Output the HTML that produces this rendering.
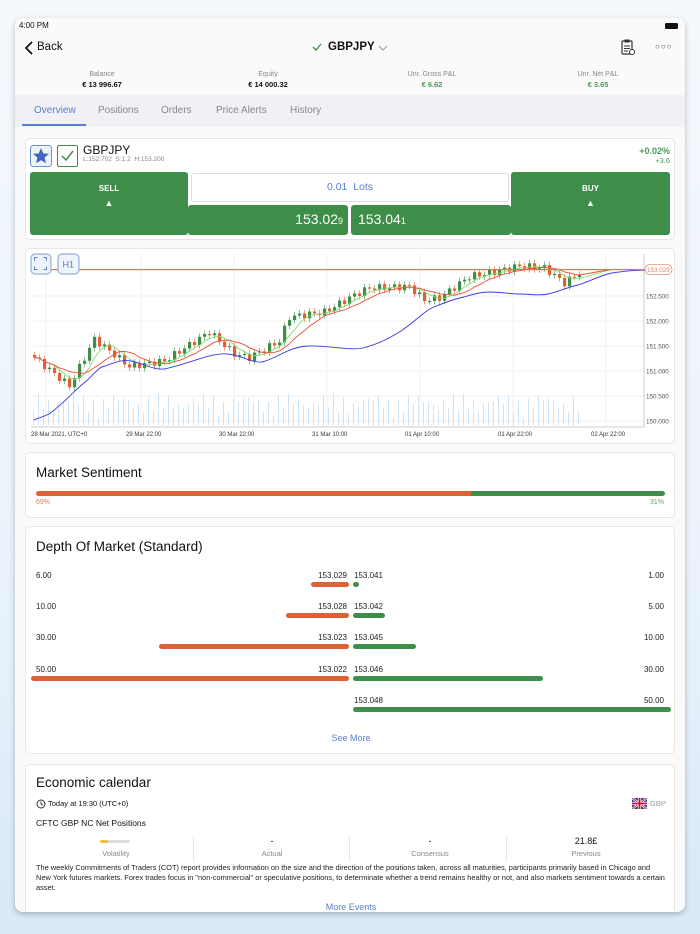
<!DOCTYPE html>
<html><head><meta charset="utf-8">
<style>
*{box-sizing:border-box;margin:0;padding:0}
body{width:700px;height:934px;overflow:hidden;font-family:"Liberation Sans",sans-serif;background:linear-gradient(180deg,#f4f9fd 0%,#eaf3fb 60%,#d9e9f8 100%);position:relative;color:#111}
.scr{position:absolute;left:15px;top:18px;width:670px;height:894px;background:#fafafa;border-radius:8px;overflow:hidden;box-shadow:0 2px 6px rgba(0,0,0,.25)}
.abs{position:absolute}
.card{position:absolute;left:10px;width:650px;background:#fff;border:1px solid #e6e6e6;border-radius:5px}
.sm{font-size:7px;color:#888;text-align:center}
.val{font-size:7.5px;font-weight:bold;text-align:center}
.tab{position:absolute;top:87px;font-size:10px;color:#888}
.h{font-size:13.5px;color:#111}
.dl{position:absolute;font-size:8px;color:#222}
.bar{position:absolute;height:5px;border-radius:3px}
.r{background:#dd6136}.g{background:#3e8e4a}
</style></head><body>
<div class="scr">
 <div class="abs" style="left:4px;top:3px;font-size:8px">4:00 PM</div>
 <div class="abs" style="left:650px;top:5px;width:13px;height:6px;background:#111;border-radius:1.5px"></div>
 <svg class="abs" style="left:8px;top:22px" width="12" height="16"><path d="M9 2 L3 8 L9 14" stroke="#111" stroke-width="1.8" fill="none"/></svg>
 <div class="abs" style="left:22px;top:23px;font-size:11.5px">Back</div>
 <svg class="abs" style="left:297px;top:24px" width="10" height="10"><path d="M1 5 L4 8 L9 2" stroke="#3e8e4a" stroke-width="1.3" fill="none"/></svg>
 <div class="abs" style="left:313px;top:23px;font-size:11.5px;font-weight:bold">GBPJPY</div>
 <svg class="abs" style="left:363px;top:26px" width="10" height="8"><path d="M1 2 L5 6 L9 2" stroke="#999" stroke-width="1" fill="none"/></svg>
 <svg class="abs" style="left:605px;top:20px" width="16" height="18"><rect x="2" y="3" width="10" height="13" rx="1" fill="none" stroke="#333" stroke-width="1.2"/><rect x="4.5" y="1.5" width="5" height="3" fill="#333"/><path d="M4 8h6M4 10.5h6M4 13h4" stroke="#333"/><circle cx="12" cy="14" r="2.5" fill="#fff" stroke="#333"/></svg>
 <div class="abs" style="left:640px;top:24px;font-size:8px;color:#444;letter-spacing:1px">○○○</div>
 <div class="abs sm" style="left:47px;top:53px;width:80px">Balance</div><div class="abs val" style="left:47px;top:62px;width:80px">€ 13 996.67</div>
 <div class="abs sm" style="left:213px;top:53px;width:80px">Equity</div><div class="abs val" style="left:213px;top:62px;width:80px">€ 14 000.32</div>
 <div class="abs sm" style="left:377px;top:53px;width:80px">Unr. Gross P&amp;L</div><div class="abs val" style="left:377px;top:62px;width:80px;color:#4a9a57">€ 6.62</div>
 <div class="abs sm" style="left:543px;top:53px;width:80px">Unr. Net P&amp;L</div><div class="abs val" style="left:543px;top:62px;width:80px;color:#4a9a57">€ 3.65</div>
 <div class="abs" style="left:0;top:77px;width:670px;height:32px;background:#f0f0f5"></div>
 <div class="tab" style="left:19px;color:#5b7fc9">Overview</div>
 <div class="abs" style="left:7px;top:106px;width:64px;height:2px;background:#5b7fc9"></div>
 <div class="tab" style="left:83px">Positions</div>
 <div class="tab" style="left:146px">Orders</div>
 <div class="tab" style="left:201px">Price Alerts</div>
 <div class="tab" style="left:275px">History</div>

 <div class="card" style="top:120px;height:102px">
  <div class="abs" style="left:4px;top:6px;width:22px;height:22px;border:1px solid #6b8fd6;border-radius:3px;background:#eef3fc"><svg width="20" height="20"><path d="M10 2 L12.3 7.5 L18 7.8 L13.6 11.6 L15 17.3 L10 14.2 L5 17.3 L6.4 11.6 L2 7.8 L7.7 7.5Z" fill="#3e66c2"/></svg></div>
  <div class="abs" style="left:31px;top:6px;width:21px;height:22px;border:1px solid #3e8e4a;border-radius:2px"><svg width="19" height="20"><path d="M4 10 L8 14 L15 5" stroke="#3e8e4a" stroke-width="1.5" fill="none"/></svg></div>
  <div class="abs" style="left:57px;top:4px;font-size:12px">GBPJPY</div>
  <div class="abs" style="left:57px;top:17px;font-size:6.5px;color:#888">L:152.702 &nbsp;S:1.2 &nbsp;H:153.200</div>
  <div class="abs" style="right:4px;top:7px;font-size:9px;color:#4a9a57;font-weight:bold">+0.02%</div>
  <div class="abs" style="right:4px;top:17px;font-size:7.5px;color:#4a9a57">+3.6</div>
  <div class="abs g" style="left:4px;top:33px;width:158px;height:63px;border-radius:3px"></div>
  <div class="abs g" style="left:485px;top:33px;width:159px;height:63px;border-radius:3px"></div>
  <div class="abs g" style="left:162px;top:66px;width:160px;height:30px;border-radius:3px"></div>
  <div class="abs g" style="left:325px;top:66px;width:160px;height:30px;border-radius:3px"></div>
  <div class="abs" style="left:165px;top:34px;width:318px;height:29px;background:#fff;border:1px solid #ddd;border-radius:3px;text-align:center;font-size:10.5px;color:#5b7fc9;line-height:27px">0.01 &nbsp;Lots</div>
  <div class="abs" style="left:4px;top:43px;width:158px;text-align:center;color:#fff;font-size:8px;font-weight:bold;line-height:14px">SELL<br><span style="font-size:9px">▲</span></div>
  <div class="abs" style="left:485px;top:43px;width:159px;text-align:center;color:#fff;font-size:8px;font-weight:bold;line-height:14px">BUY<br><span style="font-size:9px">▲</span></div>
  <div class="abs" style="left:162px;top:72px;width:155px;text-align:right;color:#fff;font-size:14px">153.02<span style="font-size:9px">9</span></div>
  <div class="abs" style="left:332px;top:72px;color:#fff;font-size:14px">153.04<span style="font-size:9px">1</span></div>
 </div>

 <div class="card" style="top:230px;height:196px"><svg id="ch" width="650" height="196" style="position:absolute;left:0;top:0"></svg></div>

 <div class="card" style="top:434px;height:66px">
  <div class="abs h" style="left:10px;top:12px">Market Sentiment</div>
  <div class="bar r" style="left:10px;top:38px;width:435px;border-radius:3px 0 0 3px"></div>
  <div class="bar g" style="left:445px;top:38px;width:194px;border-radius:0 3px 3px 0"></div>
  <div class="abs" style="left:10px;top:46px;font-size:7px;color:#e8805f">69%</div>
  <div class="abs" style="right:10px;top:46px;font-size:7px;color:#5da86a">31%</div>
 </div>

 <div class="card" style="top:508px;height:228px">
  <div class="abs h" style="left:10px;top:12px">Depth Of Market (Standard)</div>
  <div class="dl" style="left:10px;top:44px">6.00</div><div class="dl" style="right:327px;top:44px">153.029</div><div class="dl" style="left:328px;top:44px">153.041</div><div class="dl" style="right:10px;top:44px">1.00</div>
  <div class="bar r" style="left:285px;top:55px;width:38px"></div><div class="bar g" style="left:327px;top:55px;width:6px"></div>
  <div class="dl" style="left:10px;top:75px">10.00</div><div class="dl" style="right:327px;top:75px">153.028</div><div class="dl" style="left:328px;top:75px">153.042</div><div class="dl" style="right:10px;top:75px">5.00</div>
  <div class="bar r" style="left:260px;top:86px;width:63px"></div><div class="bar g" style="left:327px;top:86px;width:32px"></div>
  <div class="dl" style="left:10px;top:106px">30.00</div><div class="dl" style="right:327px;top:106px">153.023</div><div class="dl" style="left:328px;top:106px">153.045</div><div class="dl" style="right:10px;top:106px">10.00</div>
  <div class="bar r" style="left:133px;top:117px;width:190px"></div><div class="bar g" style="left:327px;top:117px;width:63px"></div>
  <div class="dl" style="left:10px;top:138px">50.00</div><div class="dl" style="right:327px;top:138px">153.022</div><div class="dl" style="left:328px;top:138px">153.046</div><div class="dl" style="right:10px;top:138px">30.00</div>
  <div class="bar r" style="left:5px;top:149px;width:318px"></div><div class="bar g" style="left:327px;top:149px;width:190px"></div>
  <div class="dl" style="left:328px;top:169px">153.048</div><div class="dl" style="right:10px;top:169px">50.00</div>
  <div class="bar g" style="left:327px;top:180px;width:318px"></div>
  <div class="abs" style="left:0;width:650px;top:206px;text-align:center;font-size:9px;color:#5b7fc9">See More</div>
 </div>

 <div class="card" style="top:746px;height:160px">
  <div class="abs h" style="left:10px;top:10px">Economic calendar</div>
  <svg class="abs" style="left:10px;top:34px" width="10" height="10"><circle cx="5" cy="5" r="4" fill="none" stroke="#333"/><path d="M5 2.5V5L6.8 6.2" stroke="#333" fill="none"/></svg>
  <div class="abs" style="left:22px;top:34px;font-size:7.5px">Today at 19:30 (UTC+0)</div>
  <svg class="abs" style="left:606px;top:33px" width="15" height="11"><rect width="15" height="11" fill="#1f3c8f"/><path d="M0 0L15 11M15 0L0 11" stroke="#fff" stroke-width="2.2"/><path d="M0 0L15 11M15 0L0 11" stroke="#c8102e" stroke-width=".8"/><path d="M7.5 0V11M0 5.5H15" stroke="#fff" stroke-width="3.2"/><path d="M7.5 0V11M0 5.5H15" stroke="#c8102e" stroke-width="1.8"/></svg>
  <div class="abs" style="left:624px;top:34px;font-size:7.5px;color:#999">GBP</div>
  <div class="abs" style="left:10px;top:53px;font-size:8.5px">CFTC GBP NC Net Positions</div>
  <div class="abs" style="left:74px;top:75px;width:30px;height:3px;background:#ddd;border-radius:2px"><div style="width:8px;height:3px;background:#f3c234;border-radius:2px"></div></div>
  <div class="abs sm" style="left:50px;top:84px;width:80px;font-size:7.5px">Volatility</div>
  <div class="abs" style="left:167px;top:71px;width:1px;height:26px;background:#e6e6e6"></div>
  <div class="abs" style="left:206px;top:71px;width:80px;text-align:center;font-size:9px">-</div><div class="abs sm" style="left:206px;top:84px;width:80px;font-size:7.5px">Actual</div>
  <div class="abs" style="left:323px;top:71px;width:1px;height:26px;background:#e6e6e6"></div>
  <div class="abs" style="left:364px;top:71px;width:80px;text-align:center;font-size:9px">-</div><div class="abs sm" style="left:364px;top:84px;width:80px;font-size:7.5px">Consensus</div>
  <div class="abs" style="left:480px;top:71px;width:1px;height:26px;background:#e6e6e6"></div>
  <div class="abs" style="left:520px;top:71px;width:80px;text-align:center;font-size:9px">21.8£</div><div class="abs sm" style="left:520px;top:84px;width:80px;font-size:7.5px">Previous</div>
  <div class="abs" style="left:10px;top:98px;width:630px;font-size:7.4px;line-height:10px;color:#222">The weekly Commitments of Traders (COT) report provides information on the size and the direction of the positions taken, across all maturities, participants primarily based in Chicago and New York futures markets. Forex trades focus in "non-commercial" or speculative positions, to determinate whether a trend remains healthy or not, and also markets sentiment towards a certain asset.</div>
  <div class="abs" style="left:0;width:650px;top:137px;text-align:center;font-size:9px;color:#5b7fc9">More Events</div>
 </div>
</div>
<script>
(function(){
var s=document.getElementById('ch'),h='';
function Y(p){return 420-248-(p-150)*50;}
var kp=[[0,151.27],[7,150.7],[12,151.64],[19,151.09],[26,151.2],[35,151.78],[40,151.34],[43,151.27],[49,151.6],[51,152.08],[58,152.18],[64,152.52],[67,152.66],[75,152.69],[78,152.42],[81,152.46],[87,152.89],[91,152.96],[97,153.1],[102,153.06],[106,152.76],[109,152.96]];
var N=110,cl=[];
for(var i=0;i<N;i++){for(var k=0;k<kp.length-1;k++){if(i>=kp[k][0]&&i<=kp[k+1][0]){var t=(i-kp[k][0])/(kp[k+1][0]-kp[k][0]||1);cl.push(kp[k][1]+t*(kp[k+1][1]-kp[k][1])+Math.sin(i*2.3)*0.07);break;}}}
var x0=7,dx=5;
for(var g=0;g<7;g++){var gy=Y(150+g*0.5);h+='<line x1="5" x2="618" y1="'+gy+'" y2="'+gy+'" stroke="#f0f0f0"/>';h+='<text x="620" y="'+(gy+2.5)+'" font-size="6.3" fill="#555" font-family="Liberation Sans">'+(150+g*0.5).toFixed(3)+'</text>';}
var xl=[[5,'28 Mar 2021, UTC+0'],[100,'29 Mar 22:00'],[193,'30 Mar 22:00'],[286,'31 Mar 10:00'],[379,'01 Apr 10:00'],[472,'01 Apr 22:00'],[565,'02 Apr 22:00']];
xl.forEach(function(a){h+='<line x1="'+(a[0]+15)+'" x2="'+(a[0]+15)+'" y1="5" y2="178" stroke="#f2f2f2"/>';h+='<text x="'+a[0]+'" y="187" font-size="6" fill="#333" font-family="Liberation Sans">'+a[1]+'</text>';});
h+='<line x1="5" x2="618" y1="178" y2="178" stroke="#ccc"/><line x1="618" x2="618" y1="5" y2="178" stroke="#ccc"/>';
for(var i=0;i<N;i++){var vh=4+Math.abs(Math.sin(i*1.7)*18)+Math.abs(Math.cos(i*0.37))*10;h+='<rect x="'+(x0+i*dx)+'" y="'+(176-vh)+'" width="1" height="'+vh+'" fill="#cfe3f3"/>';}
for(var i=0;i<N;i++){var o=i?cl[i-1]:cl[0]+0.05,c=cl[i],col=c>=o?'#3e8e4a':'#dd6136',x=x0+i*dx;var hi=Math.max(o,c)+0.07,lo=Math.min(o,c)-0.07;h+='<line x1="'+(x+1.5)+'" x2="'+(x+1.5)+'" y1="'+Y(hi)+'" y2="'+Y(lo)+'" stroke="'+col+'" stroke-width=".6"/>';var y1=Y(Math.max(o,c)),hh=Math.max(1,Y(Math.min(o,c))-y1);h+='<rect x="'+x+'" y="'+y1+'" width="3.2" height="'+hh+'" fill="'+col+'"/>';}
function ma(p,col,ext){var d='';for(var i=0;i<N;i++){var a=0,n=0;for(var j=Math.max(0,i-p+1);j<=i;j++){a+=cl[j];n++;}d+=(i?'L':'M')+(x0+i*dx+1.5)+' '+Y(a/n).toFixed(1);}d+='L'+ext+' '+Y(153.03);h+='<path d="'+d+'" fill="none" stroke="'+col+'" stroke-width=".9"/>';}
ma(5,'#7ee06a',585);ma(9,'#ee4b3a',585);
h+='<path d="M7.7 171 C15 168 20 167 24.5 164 C40 152 50 140 58 134 C68 126 72 118 79 117 C90 113 98 110 105 112 C118 115 128 121 138 120 C160 116 185 103 202 105 C215 106 225 114 236 113 C250 110 262 98 282 97 C300 96 325 102 337 99 C352 95 362 90 375 82 C390 72 398 62 408 58 C420 53 428 50 438 48 C448 45 455 43 463 43 C475 43 485 45 493 45 C505 45 512 47 522 45 C535 42 542 38 552 36 C565 32 575 26 586 24 C600 22 610 21 619 21" fill="none" stroke="#3a3ae6" stroke-width=".9"/>';
h+='<line x1="5" x2="618" y1="'+Y(153.029)+'" y2="'+Y(153.029)+'" stroke="#c8804f" stroke-width="1.2"/>';
h+='<rect x="619" y="'+(Y(153.029)-5)+'" width="27" height="10" rx="5" fill="#fff" stroke="#e8805f" stroke-width=".7"/><text x="621" y="'+(Y(153.029)+2.5)+'" font-size="6.3" fill="#e8805f" font-family="Liberation Sans">153.029</text>';
h+='<rect x="5" y="5" width="20" height="20" rx="4" fill="#eef3fc" stroke="#7f9fdc"/><path d="M9 12V9H12M18 9H21V12M21 18V21H18M12 21H9V18" stroke="#5b7fc9" fill="none" transform="translate(-0.5,-0.5)"/>';
h+='<rect x="32" y="5" width="21" height="20" rx="4" fill="#eef3fc" stroke="#7f9fdc"/><text x="36.5" y="18.5" font-size="9" fill="#5b7fc9" font-family="Liberation Sans">H1</text>';
s.innerHTML=h;})();
</script>
</body></html>
